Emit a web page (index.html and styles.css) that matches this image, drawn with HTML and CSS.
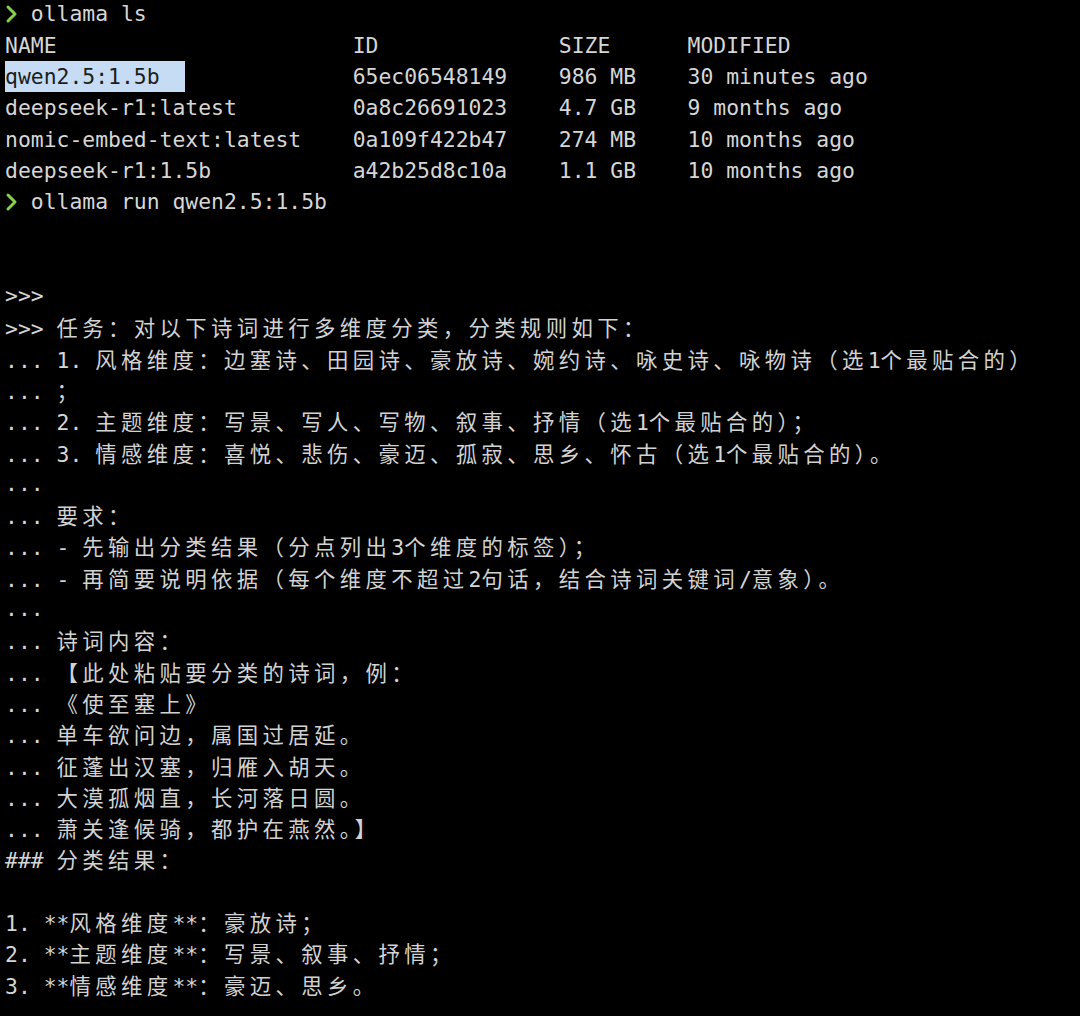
FILE: index.html
```html
<!DOCTYPE html>
<html lang="zh-CN">
<head>
<meta charset="utf-8">
<title>ollama terminal</title>
<link rel="stylesheet" href="styles.css">
</head>
<body>
<div class="term">
<div class="ln"><span class="g"><svg class="chev" viewBox="0 0 13 20" width="13" height="20"><polyline points="3,3 10,10 3,17" /></svg></span> ollama ls</div>
<div class="ln">NAME                       ID              SIZE      MODIFIED</div>
<div class="ln"><span class="sel">qwen2.5:1.5b  </span>             65ec06548149    986 MB    30 minutes ago</div>
<div class="ln">deepseek-r1:latest         0a8c26691023    4.7 GB    9 months ago</div>
<div class="ln">nomic-embed-text:latest    0a109f422b47    274 MB    10 months ago</div>
<div class="ln">deepseek-r1:1.5b           a42b25d8c10a    1.1 GB    10 months ago</div>
<div class="ln"><span class="g"><svg class="chev" viewBox="0 0 13 20" width="13" height="20"><polyline points="3,3 10,10 3,17" /></svg></span> ollama run qwen2.5:1.5b</div>
<div class="ln"></div>
<div class="ln"></div>
<div class="ln">&gt;&gt;&gt;</div>
<div class="ln">&gt;&gt;&gt; <span class="w">任务：对以下诗词进行多维度分类，分类规则如下：</span></div>
<div class="ln">... 1. <span class="w">风格维度：边塞诗、田园诗、豪放诗、婉约诗、咏史诗、咏物诗（选</span>1<span class="w">个最贴合的）</span></div>
<div class="ln">... <span class="w">；</span></div>
<div class="ln">... 2. <span class="w">主题维度：写景、写人、写物、叙事、抒情（选</span>1<span class="w">个最贴合的）；</span></div>
<div class="ln">... 3. <span class="w">情感维度：喜悦、悲伤、豪迈、孤寂、思乡、怀古（选</span>1<span class="w">个最贴合的）。</span></div>
<div class="ln">...</div>
<div class="ln">... <span class="w">要求：</span></div>
<div class="ln">... - <span class="w">先输出分类结果（分点列出</span>3<span class="w">个维度的标签）；</span></div>
<div class="ln">... - <span class="w">再简要说明依据（每个维度不超过</span>2<span class="w">句话，结合诗词关键词</span>/<span class="w">意象）。</span></div>
<div class="ln">...</div>
<div class="ln">... <span class="w">诗词内容：</span></div>
<div class="ln">... <span class="w">【此处粘贴要分类的诗词，例：</span></div>
<div class="ln">... <span class="w">《使至塞上》</span></div>
<div class="ln">... <span class="w">单车欲问边，属国过居延。</span></div>
<div class="ln">... <span class="w">征蓬出汉塞，归雁入胡天。</span></div>
<div class="ln">... <span class="w">大漠孤烟直，长河落日圆。</span></div>
<div class="ln">... <span class="w">萧关逢候骑，都护在燕然。】</span></div>
<div class="ln">### <span class="w">分类结果：</span></div>
<div class="ln"></div>
<div class="ln">1. **<span class="w">风格维度</span>**<span class="w">：豪放诗；</span></div>
<div class="ln">2. **<span class="w">主题维度</span>**<span class="w">：写景、叙事、抒情；</span></div>
<div class="ln">3. **<span class="w">情感维度</span>**<span class="w">：豪迈、思乡。</span></div>
</div>
</body>
</html>
```
FILE: styles.css
```css
html, body {
  margin: 0;
  padding: 0;
  background: #000;
}

body {
  width: 1080px;
  height: 1016px;
  overflow: hidden;
}

.term {
  margin-top: -1.6px;
  padding-left: 5px;
  font-family: "DejaVu Sans Mono", "Noto Sans CJK SC", monospace;
  font-size: 21.4px;
  line-height: 31.3px;
  color: #d6d6d6;
}

.ln {
  height: 31.3px;
  white-space: pre;
}

.g {
  display: inline-block;
  width: 1ch;
  height: 31.3px;
  vertical-align: top;
  position: relative;
}

.chev {
  position: absolute;
  left: 0;
  top: 5.5px;
  fill: none;
  stroke: #86d14a;
  stroke-width: 3;
  stroke-linecap: round;
  stroke-linejoin: round;
}

.sel {
  background: #c6dcf4;
  color: #1c1c1c;
  display: inline-block;
  height: 31.3px;
  vertical-align: top;
}

.w {
  font-family: "Noto Sans CJK SC", sans-serif;
  font-size: 21.4px;
  letter-spacing: 4.36px;
  color: #d2d2d2;
}
```
